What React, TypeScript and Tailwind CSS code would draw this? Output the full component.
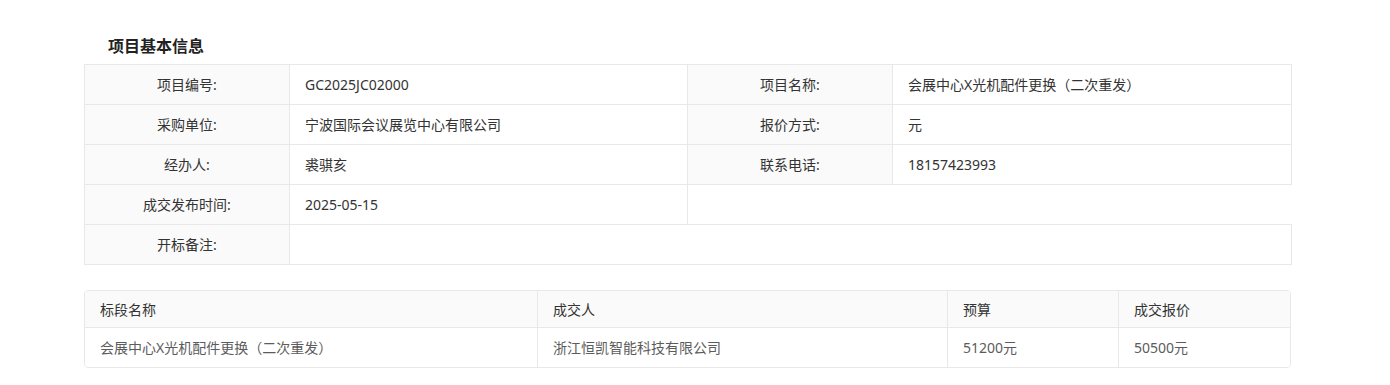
import React from "react";

const font = {
  fontFamily: '"Noto Sans", "Noto Sans CJK SC", sans-serif',
};

type Row = { label: string; value: string; label2?: string; value2?: string; wide?: boolean };

const infoRows: Row[] = [
  { label: "项目编号:", value: "GC2025JC02000", label2: "项目名称:", value2: "会展中心X光机配件更换（二次重发）" },
  { label: "采购单位:", value: "宁波国际会议展览中心有限公司", label2: "报价方式:", value2: "元" },
  { label: "经办人:", value: "裘骐亥", label2: "联系电话:", value2: "18157423993" },
  { label: "成交发布时间:", value: "2025-05-15" },
  { label: "开标备注:", value: "", wide: true },
];

const labelCls =
  "h-[40px] border border-[#e8e8e8] bg-[#fafafa] p-0 text-center align-middle text-[14px] text-[#333]";
const valueCls =
  "h-[40px] border border-[#e8e8e8] bg-white pl-[15px] pr-4 py-0 text-left align-middle text-[14px] text-[#333]";

function InfoTable() {
  return (
    <table className="w-[1207px] table-fixed border-collapse">
      <colgroup>
        <col className="w-[205px]" />
        <col className="w-[398px]" />
        <col className="w-[205px]" />
        <col className="w-[399px]" />
      </colgroup>
      <tbody>
        {infoRows.map((r) => (
          <tr key={r.label}>
            <td className={labelCls}>{r.label}</td>
            <td className={valueCls} colSpan={r.wide ? 3 : 1}>
              {r.value}
            </td>
            {r.label2 && <td className={labelCls}>{r.label2}</td>}
            {r.value2 && <td className={valueCls}>{r.value2}</td>}
          </tr>
        ))}
      </tbody>
    </table>
  );
}

const cols = [
  { title: "标段名称", w: "w-[453px]", value: "会展中心X光机配件更换（二次重发）" },
  { title: "成交人", w: "w-[410px]", value: "浙江恒凯智能科技有限公司" },
  { title: "预算", w: "w-[171px]", value: "51200元" },
  { title: "成交报价", w: "w-[173px]", value: "50500元" },
];

function ResultTable() {
  return (
    <div className="w-[1207px] overflow-hidden rounded-[4px] border border-[#e8e8e8]">
      <div className="flex h-[37px] border-b border-[#e8e8e8] bg-[#fafafa]">
        {cols.map((c, i) => (
          <div
            key={c.title}
            className={`${c.w} flex shrink-0 items-center px-[15px] text-[14px] text-[#333] ${
              i < cols.length - 1 ? "border-r border-[#e8e8e8]" : ""
            }`}
          >
            {c.title}
          </div>
        ))}
      </div>
      <div className="flex h-[39px] bg-white">
        {cols.map((c, i) => (
          <div
            key={c.title}
            className={`${c.w} flex shrink-0 items-center px-[15px] text-[14px] text-[#5c5c5c] ${
              i < cols.length - 1 ? "border-r border-[#e8e8e8]" : ""
            }`}
          >
            {c.value}
          </div>
        ))}
      </div>
    </div>
  );
}

export default function App() {
  return (
    <div className="h-[385px] w-[1390px] bg-white" style={font}>
      <div className="ml-[84px] pt-[36px]">
        <h2 className="pl-6 text-[16px] font-bold leading-[20px] text-[#222]">项目基本信息</h2>
        <div className="mt-[8px]">
          <InfoTable />
        </div>
        <div className="mt-[25px]">
          <ResultTable />
        </div>
      </div>
    </div>
  );
}
